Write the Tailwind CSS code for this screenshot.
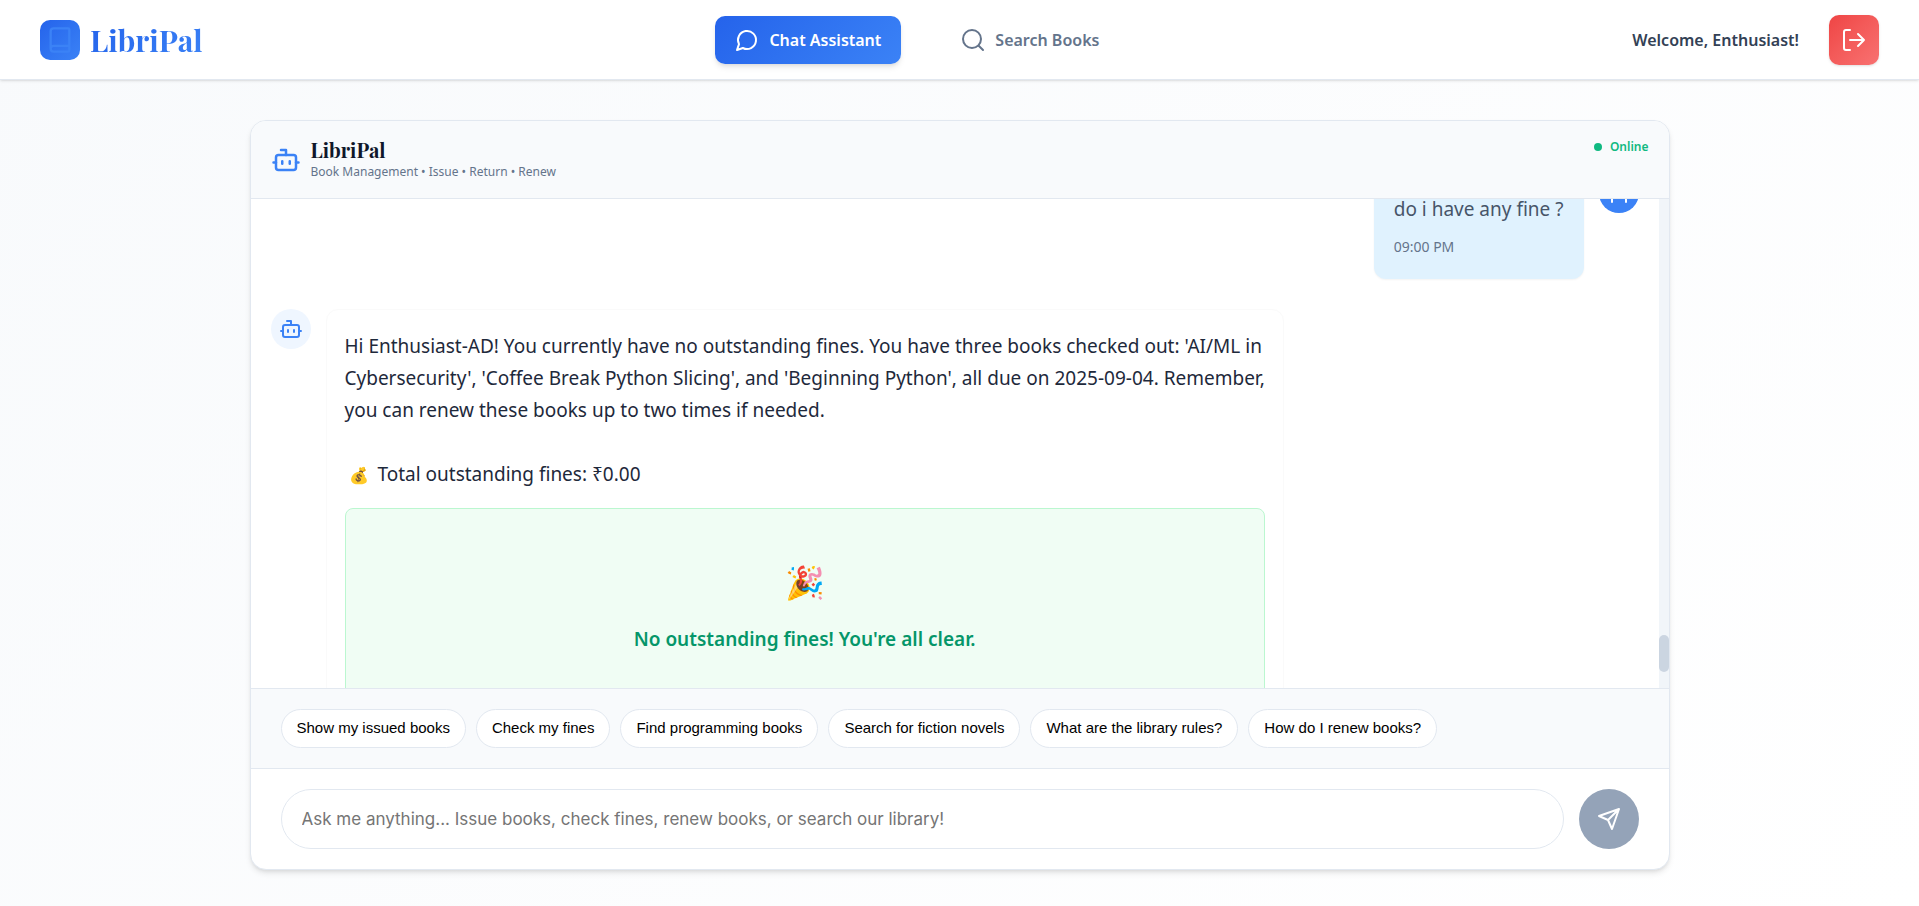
<!DOCTYPE html>
<html lang="en">
<head>
<meta charset="utf-8">
<meta name="viewport" content="width=device-width, initial-scale=1">
<title>LibriPal</title>
<script src="https://cdn.jsdelivr.net/npm/@tailwindcss/browser@4"></script>
</head>
<body class="h-screen flex flex-col bg-linear-135 from-[#f8fafc] to-white font-['Segoe_UI','Noto_Sans',sans-serif] text-[#1e293b] overflow-hidden">
<svg class="hidden">
  <symbol id="bot" viewBox="0 0 24 24" fill="none" stroke="currentColor" stroke-width="2" stroke-linecap="round" stroke-linejoin="round"><path d="M12 8V4H8"/><rect width="16" height="12" x="4" y="8" rx="2"/><path d="M2 14h2M20 14h2M15 13v2M9 13v2"/></symbol>
</svg>
<header class="relative shrink-0 h-20 border-b border-[#e2e8f0] bg-white shadow-sm px-10 flex justify-between items-center">
  <a href="#" class="flex items-center gap-[10px]">
    <span class="size-10 rounded-[10px] bg-linear-135 from-[#2563eb] to-[#3b82f6] flex items-center justify-center">
      <svg class="size-7" viewBox="0 0 24 24" fill="none" stroke="#3b82f6" stroke-width="2" stroke-linecap="round" stroke-linejoin="round"><path d="M4 19.500v-15A2.500 2.500 0 0 1 6.500 2H19a1 1 0 0 1 1 1v18a1 1 0 0 1-1 1H6.500a1 1 0 0 1 0-5H20"/></svg>
    </span>
    <span class="text-[30px] leading-10 font-bold font-['Playfair_Display','Liberation_Serif',serif] bg-linear-135 from-[#2563eb] to-[#3b82f6] bg-clip-text text-transparent">LibriPal</span>
  </a>
  <nav class="flex gap-10">
    <button class="h-12 px-5 flex items-center gap-[10px] rounded-[10px] bg-linear-135 from-[#2563eb] to-[#3b82f6] text-white font-semibold text-base shadow-md">
      <svg class="size-6" viewBox="0 0 24 24" fill="none" stroke="currentColor" stroke-width="2" stroke-linecap="round" stroke-linejoin="round"><path d="M7.900 20A9 9 0 1 0 4 16.100L2 22Z"/></svg>Chat Assistant</button>
    <button class="h-12 px-5 flex items-center gap-[10px] rounded-[10px] text-[#64748b] font-semibold text-base">
      <svg class="size-6" viewBox="0 0 24 24" fill="none" stroke="currentColor" stroke-width="2" stroke-linecap="round" stroke-linejoin="round"><circle cx="11" cy="11" r="9"/><path d="m22 22-4.300-4.300"/></svg>Search Books</button>
  </nav>
  <div class="flex items-center justify-end gap-[30px]">
    <span class="text-base font-semibold text-[#334155]">Welcome, Enthusiast!</span>
    <button aria-label="Log out" class="size-[50px] rounded-[10px] bg-linear-135 from-[#ef4444] to-[#f87171] text-white flex items-center justify-center shadow-sm">
      <svg class="size-6" viewBox="0 0 24 24" fill="none" stroke="currentColor" stroke-width="2" stroke-linecap="round" stroke-linejoin="round"><path d="M8 22H4a2 2 0 0 1-2-2V4a2 2 0 0 1 2-2h4M16 18l6-6-6-6M22 12H8"/></svg></button>
  </div>
</header>
<main class="flex-1 min-h-0 px-10 pt-10 pb-9 flex">
  <section class="w-full max-w-[1420px] mx-auto rounded-2xl border border-[#e2e8f0] bg-white shadow-md flex flex-col overflow-hidden">
    <div class="shrink-0 h-[78px] px-5 border-b border-[#e2e8f0] bg-[#f8fafc] flex items-center gap-[10px]">
      <svg class="size-[30px] text-[#3b82f6]"><use href="#bot"/></svg>
      <div class="flex-1">
        <h1 class="text-xl leading-6 font-bold text-[#0f172a] font-['Playfair_Display','Liberation_Serif',serif]">LibriPal</h1>
        <p class="text-xs leading-5 text-[#64748b]">Book Management • Issue • Return • Renew</p>
      </div>
      <p class="self-start mt-4 flex items-center gap-2 text-xs leading-5 font-semibold text-[#10b981]"><span class="size-2 rounded-full bg-[#10b981]"></span>Online</p>
    </div>
    <div class="flex-1 min-h-0 flex">
      <div class="flex-1 px-5 flex flex-col overflow-hidden">
        <div class="shrink-0 -mt-[26px] flex justify-end gap-[15px]">
          <div class="p-5 rounded-xl bg-[#e0f2fe] shadow-xs">
            <p class="text-[19px] leading-8 text-[#475569]">do i have any fine ?</p>
            <p class="mt-[10px] text-sm leading-6 text-[#64748b]">09:00 PM</p>
          </div>
          <div class="size-10 rounded-full bg-[#3b82f6] text-white flex items-center justify-center">
            <svg class="size-6" viewBox="0 0 24 24" fill="none" stroke="currentColor" stroke-width="2" stroke-linecap="round"><path d="M19 21v-2a4 4 0 0 0-4-4H9a4 4 0 0 0-4 4v2"/><circle cx="12" cy="7" r="4"/></svg>
          </div>
        </div>
        <div class="shrink-0 mt-[30px] flex gap-[15px]">
          <div class="size-10 shrink-0 rounded-full bg-[#eff6ff] text-[#3b82f6] flex items-center justify-center"><svg class="size-6"><use href="#bot"/></svg></div>
          <div class="px-[18px] pt-5 rounded-xl border border-[#fafafa] bg-white">
            <p class="text-[19px] leading-8 text-[#1e293b]">Hi Enthusiast-AD! You currently have no outstanding fines. You have three books checked out: 'AI/ML in<br>Cybersecurity', 'Coffee Break Python Slicing', and 'Beginning Python', all due on 2025-09-04. Remember,<br>you can renew these books up to two times if needed.<br><br><span class="mx-1 text-base">💰</span> Total outstanding fines: ₹0.00</p>
            <div class="mt-[18px] h-[220px] pt-12 rounded-lg border border-[#bbf7d0] bg-[#f0fdf4] text-center">
              <p class="text-[32px] leading-[50px]">🎉</p>
              <p class="mt-4 text-[19px] leading-8 font-semibold text-[#059669]">No outstanding fines! You're all clear.</p>
            </div>
          </div>
        </div>
      </div>
      <div class="w-[10px] shrink-0 bg-[#f1f5f9] flex flex-col justify-end pb-4"><div class="h-[37px] rounded-full bg-[#cbd5e1]"></div></div>
    </div>
    <div class="shrink-0 h-20 px-[30px] border-t border-[#e2e8f0] bg-[#f8fafc] flex items-center gap-[10px] font-['Liberation_Sans',sans-serif] text-[15px] text-black">
      <button class="h-[39px] px-[15px] rounded-full border border-[#e2e8f0] bg-white">Show my issued books</button>
      <button class="h-[39px] px-[15px] rounded-full border border-[#e2e8f0] bg-white">Check my fines</button>
      <button class="h-[39px] px-[15px] rounded-full border border-[#e2e8f0] bg-white">Find programming books</button>
      <button class="h-[39px] px-[15px] rounded-full border border-[#e2e8f0] bg-white">Search for fiction novels</button>
      <button class="h-[39px] px-[15px] rounded-full border border-[#e2e8f0] bg-white">What are the library rules?</button>
      <button class="h-[39px] px-[15px] rounded-full border border-[#e2e8f0] bg-white">How do I renew books?</button>
    </div>
    <form class="shrink-0 border-t border-[#e2e8f0] px-[30px] py-5 flex gap-[15px]">
      <input aria-label="Message" type="text" placeholder="Ask me anything... Issue books, check fines, renew books, or search our library!" class="flex-1 min-w-0 h-[60px] px-5 rounded-full border border-[#e2e8f0] bg-white font-['Inter',sans-serif] text-[17px] placeholder:text-[#757575]">
      <button type="button" aria-label="Send" class="size-[60px] shrink-0 rounded-full bg-[#94a3b8] text-white flex items-center justify-center">
        <svg class="size-6" viewBox="0 0 24 24" fill="none" stroke="currentColor" stroke-width="2" stroke-linecap="round" stroke-linejoin="round"><path d="m22 2-7 20-4-9-9-4ZM22 2 11 13"/></svg></button>
    </form>
  </section>
</main>
</body>
</html>
